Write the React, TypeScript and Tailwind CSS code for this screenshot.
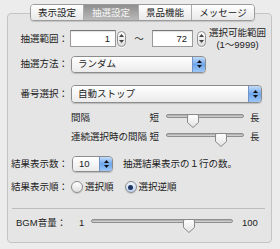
import type { ReactNode } from 'react'

const tabs = [
  { label: '表示設定', w: 'w-[52px]' },
  { label: '抽選設定', w: 'w-[55px]', active: true },
  { label: '景品機能', w: 'w-[53px]' },
  { label: 'メッセージ', w: 'w-[63px]' },
]

function UpDown({ color = '#222' }: { color?: string }) {
  return (
    <>
      <svg width="5" height="3" viewBox="0 0 5 3">
        <path d="M2.5 0 L5 3 H0 Z" fill={color} />
      </svg>
      <svg width="5" height="3" viewBox="0 0 5 3">
        <path d="M0 0 H5 L2.5 3 Z" fill={color} />
      </svg>
    </>
  )
}

function Stepper() {
  return (
    <div className="ml-[1px] flex h-[16px] w-[9px] flex-col items-center justify-center gap-[3px] rounded-[5px] border border-[#939393] bg-gradient-to-b from-white to-[#dedede] shadow-[0_1px_0_rgba(255,255,255,0.7)]">
      <UpDown color="#444" />
    </div>
  )
}

function NumField({ value, w }: { value: string; w: string }) {
  return (
    <div
      className={`flex h-[17px] ${w} items-center justify-end border border-[#9a9a9a] border-t-[#777] bg-white pr-[5px] shadow-[inset_0_1px_1px_rgba(0,0,0,0.12)]`}
    >
      {value}
    </div>
  )
}

function Select({ value, className }: { value: string; className: string }) {
  return (
    <div
      className={`flex ${className} overflow-hidden rounded-[4px] border border-[#8c8c8c] shadow-[0_1px_1px_rgba(0,0,0,0.18)]`}
    >
      <div className="flex flex-1 items-center bg-gradient-to-b from-white to-[#ebebeb] pl-[6px]">{value}</div>
      <div className="flex w-[13px] flex-col items-center justify-center gap-[2px] border-l border-[#6f93c8] bg-gradient-to-b from-[#c3dcf8] via-[#6ea6ec] to-[#9cc7f6]">
        <UpDown color="#111" />
      </div>
    </div>
  )
}

function Slider({ w, pos }: { w: string; pos: number }) {
  return (
    <div className={`relative h-[14px] ${w}`}>
      <div className="mt-[5px] h-[4px] rounded-full border border-[#8f8f8f] bg-[#cfcfcf] shadow-[inset_0_1px_1px_rgba(0,0,0,0.15)]" />
      <svg className="absolute top-0" style={{ left: pos - 6 }} width="12" height="14" viewBox="0 0 12 14">
        <defs>
          <linearGradient id="thumb" x1="0" y1="0" x2="0" y2="1">
            <stop offset="0" stopColor="#ffffff" />
            <stop offset="1" stopColor="#e2e2e2" />
          </linearGradient>
        </defs>
        <path
          d="M0.5 2 Q0.5 0.5 2 0.5 H10 Q11.5 0.5 11.5 2 V8.5 L6 13.5 L0.5 8.5 Z"
          fill="url(#thumb)"
          stroke="#8a8a8a"
        />
      </svg>
    </div>
  )
}

function Radio({ checked }: { checked?: boolean }) {
  return (
    <div
      className={`flex h-[12px] w-[12px] items-center justify-center rounded-full border border-[#8a8a8a] shadow-[0_1px_1px_rgba(0,0,0,0.12)] bg-gradient-to-b ${
        checked ? 'from-[#eef4fc] to-[#bcd2f0]' : 'from-white to-[#e0e0e0]'
      }`}
    >
      {checked && <div className="h-[5px] w-[5px] rounded-full bg-[#1f3561]" />}
    </div>
  )
}

function Label({ children }: { children: ReactNode }) {
  return <div className="w-[60px] shrink-0 whitespace-nowrap text-right">{children}</div>
}

export default function App() {
  return (
    <div className="h-[249px] w-[280px] overflow-hidden bg-[#ececec] pt-[4px] font-['Liberation_Sans','Noto_Sans_CJK_JP',sans-serif] text-[9.5px] leading-none text-[#222]">
      {/* タブ */}
      <div className="relative z-10 ml-[30px] flex h-[17px] w-fit overflow-hidden rounded-[4px] border border-[#9b9b9b] shadow-[0_1px_1px_rgba(0,0,0,0.15)]">
        {tabs.map((t, i) => (
          <div
            key={t.label}
            className={`flex ${t.w} items-center justify-center bg-gradient-to-b ${
              i > 0 ? 'border-l border-[#adadad]' : ''
            } ${t.active ? 'from-[#8e8e8e] to-[#bababa] text-[#f6f6f6]' : 'from-white to-[#e8e8e8]'}`}
          >
            {t.label}
          </div>
        ))}
      </div>

      {/* 設定ボックス */}
      <div className="-mt-[8px] ml-[7px] flex h-[230px] w-[265px] flex-col rounded-[4px] border border-[#c4c4c4] bg-[#e5e5e5] pt-[15px]">
        <div className="flex h-[19px] items-center">
          <Label>抽選範囲：</Label>
          <div className="ml-[2px]">
            <NumField value="1" w="w-[46px]" />
          </div>
          <Stepper />
          <div className="w-[26px] text-center">〜</div>
          <NumField value="72" w="w-[41px]" />
          <div className="ml-[3px]">
            <Stepper />
          </div>
          <div className="ml-[3px] text-center leading-[12px]">
            <div>選択可能範囲</div>
            <div>(1〜9999)</div>
          </div>
        </div>

        <div className="mt-[7px] flex h-[18px] items-center">
          <Label>抽選方法：</Label>
          <Select value="ランダム" className="ml-[3px] h-[17px] w-[135px]" />
        </div>

        <div className="mt-[11px] flex h-[19px] items-center">
          <Label>番号選択：</Label>
          <Select value="自動ストップ" className="ml-[3px] h-[18px] w-[191px]" />
        </div>

        <div className="mt-[7px] flex h-[16px] items-center">
          <div className="w-[60px] shrink-0" />
          <div className="ml-[3px] flex w-[88px] justify-between">
            <span>間隔</span>
            <span>短</span>
          </div>
          <div className="ml-[7px]">
            <Slider w="w-[78px]" pos={27} />
          </div>
          <span className="ml-[6px]">長</span>
        </div>

        <div className="mt-[3px] flex h-[16px] items-center">
          <div className="w-[60px] shrink-0" />
          <div className="ml-[3px] flex w-[88px] justify-between">
            <span>連続選択時の間隔</span>
            <span>短</span>
          </div>
          <div className="ml-[7px]">
            <Slider w="w-[78px]" pos={55} />
          </div>
          <span className="ml-[6px]">長</span>
        </div>

        <div className="mt-[10px] flex h-[18px] items-center">
          <Label>結果表示数：</Label>
          <Select value="10" className="ml-[4px] h-[16px] w-[41px]" />
          <span className="ml-[10px]">抽選結果表示の１行の数。</span>
        </div>

        <div className="mt-[6px] flex h-[16px] items-center">
          <Label>結果表示順：</Label>
          <div className="ml-[3px]">
            <Radio />
          </div>
          <span className="ml-[2px]">選択順</span>
          <div className="ml-[11px]">
            <Radio checked />
          </div>
          <span className="ml-[2px]">選択逆順</span>
        </div>

        <div className="ml-[4px] mt-[13px] h-px w-[253px] bg-[#bcbcbc]" />

        <div className="mt-[6px] flex h-[16px] items-center pl-[8px]">
          <div className="w-[63px] shrink-0">BGM音量：</div>
          <span className="w-[5px]">1</span>
          <div className="ml-[7px]">
            <Slider w="w-[142px]" pos={98} />
          </div>
          <span className="ml-[9px]">100</span>
        </div>
      </div>
    </div>
  )
}
